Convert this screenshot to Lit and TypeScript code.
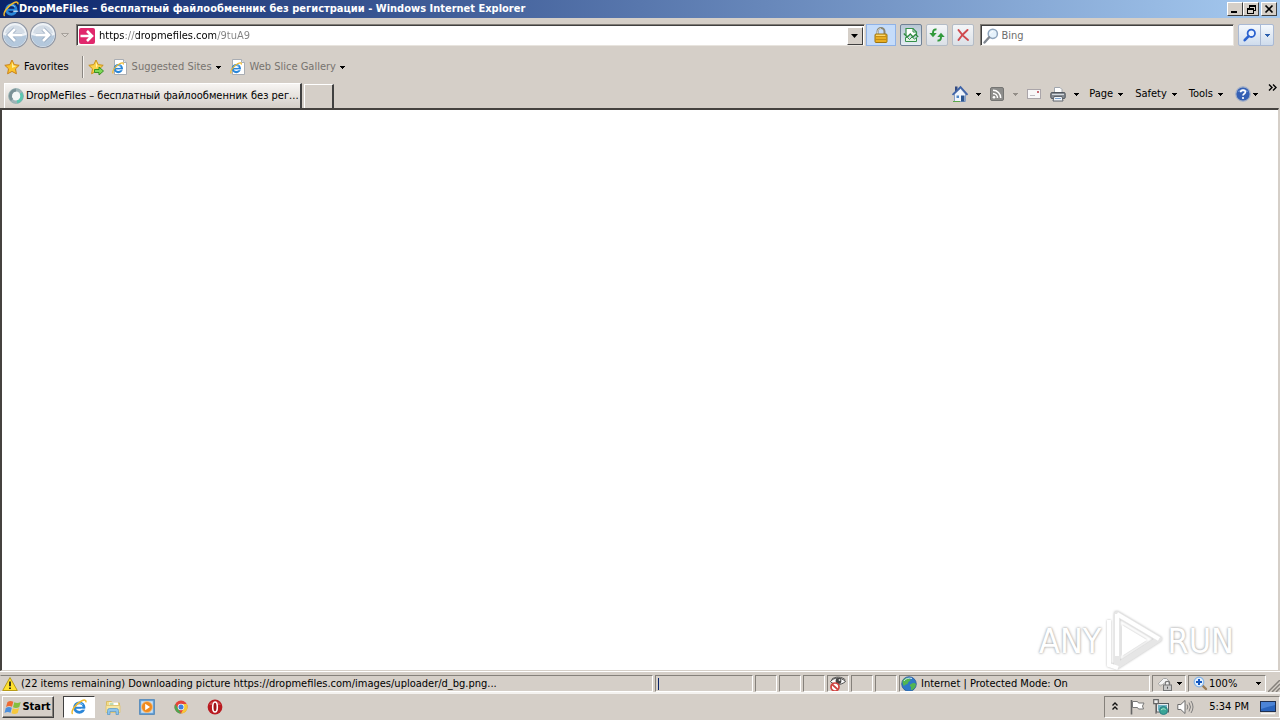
import { LitElement, html, css, svg, nothing } from "lit";
import { customElement, property } from "lit/decorators.js";

const arrow = (color = "#000") => html`<svg class="arrow" width="5" height="3" viewBox="0 0 5 3" shape-rendering="crispEdges"><path d="M0 0h5v1h-1v1h-1v1h-1v-1h-1v-1h-1z" fill=${color} /></svg>`;

const ieMark = svg`
  <circle cx="8.3" cy="8.6" r="4.7" fill="none" stroke="#2a86d8" stroke-width="2.8" />
  <path d="M5 8.8h8.8" stroke="#2a86d8" stroke-width="2" />
  <path d="M10.2 10.2h5" stroke="#f4f8fc" stroke-width="1" />
  <path d="M5 6.2c1.600-2.500 5.200-2.800 6.800-.4" stroke="#8ed0fa" stroke-width="1" fill="none" />
  <path d="M1.600 15C-.8 12.500 5 4.600 10.500 2c3-1.500 5-1.200 4.400 1.400" stroke="#f0b92c" stroke-width="1.500" fill="none" />`;

const starShape = "M8 1l2.200 4.600 5 .7-3.700 3.500.9 5L8 12.400l-4.400 2.400.9-5L.8 6.300l5-.7z";

const icons: Record<string, unknown> = {
  ie: ieMark,
  iePage: svg`<path d="M2.500.5h9l3 3v12h-12z" fill="#fff" stroke="#a9adb3" /><path d="M11.500.5v3h3" fill="#dde6ee" stroke="#a9adb3" /><g transform="translate(0 3) scale(.76)">${ieMark}</g>`,
  star: svg`<path d=${starShape} fill="#fbc42a" stroke="#c9811a" /><path d="M8 3l1.400 3.400 3.200.5L8 9z" fill="#fff0a0" />`,
  starAdd: svg`<path d=${starShape} fill="#fbd24a" stroke="#c9911a" /><path d="M8 3l1.400 3.400L8 9z" fill="#fff3b0" /><path d="M6.500 10.500h4.500V8l4.500 4-4.500 4v-2.500H6.500z" fill="#7ed957" stroke="#2c8a1c" stroke-width=".9" />`,
  spinner: svg`<circle cx="8" cy="8" r="6" fill="#f4f6f6" stroke="#9fb4b8" stroke-width="3" /><path d="M8 2a6 6 0 0 0-4 10" fill="none" stroke="#7b9197" stroke-width="3" /><path d="M13 5a6 6 0 0 1-4 9" fill="none" stroke="#5ac8b0" stroke-width="3" /><circle cx="8" cy="8" r="7.500" fill="none" stroke="#8aa" stroke-width=".6" />`,
  drop: svg`<rect width="16" height="16" rx="2" fill="#e0286c" /><path d="M1.500 8h11M8 3l5 5-5 5" fill="none" stroke="#fff" stroke-width="2.600" />`,
  lock: svg`<path d="M4.500 8V4.500a3.500 3.500 0 0 1 7 0V8" fill="none" stroke="#8a8674" stroke-width="2" /><path d="M4.500 7V4.500a3.500 3.500 0 0 1 3.500-3" fill="none" stroke="#d5d2c4" stroke-width="1" /><rect x="2" y="7" width="12" height="8.500" rx="1" fill="#e9ae22" stroke="#9c7412" /><path d="M2.500 9.500h11M2.500 12.500h11" stroke="#c38d14" /><path d="M3 8.300h9" stroke="#ffe387" />`,
  compat: svg`<path d="M3 8V1.500h7l3.500 3.500v4" fill="#fff" stroke="#35904a" stroke-width="1.200" /><path d="M10 1.500V5h3.500" fill="none" stroke="#35904a" /><path d="M.8 6.500l3.500 3.500 3-3 2.700 3 2.500-2.500 2.700 2.500" fill="none" stroke="#2e8b3f" stroke-width="1.300" /><path d="M2.500 10.500v4h11v-4l-2 1.500-2.500-2-2.500 2.500-2-2z" fill="#e4f4e4" stroke="#35904a" />`,
  refresh: svg`<path d="M7.500 2.500C5 2 4 3.500 4 6" fill="none" stroke="#329a3c" stroke-width="2" /><path d="M.3 6h7.400L4 10.200z" fill="#329a3c" /><path d="M8.500 13.500c2.500.5 3.500-1 3.500-3.500" fill="none" stroke="#329a3c" stroke-width="2" /><path d="M8.300 10h7.400L12 5.800z" fill="#329a3c" />`,
  stop: svg`<path d="M3.500 3c2 3 5 7 9.500 10M12.500 3C9 6 6 9 3.500 13" fill="none" stroke="#d04a4e" stroke-width="2" stroke-linecap="round" />`,
  search: svg`<circle cx="9.800" cy="5.800" r="4.600" fill="#e6f2fb" stroke="#8fa5bd" stroke-width="1.500" /><path d="M6.200 9.300L1.500 14.500" stroke="#808790" stroke-width="2.400" stroke-linecap="round" /><path d="M7.500 5.500a2.500 2.500 0 0 1 2.500-2" stroke="#fff" fill="none" />`,
  go: svg`<circle cx="9.300" cy="6.300" r="3.700" fill="#e9f2ff" stroke="#2b62cf" stroke-width="1.800" /><path d="M6.400 9.300l-3.700 3.900" stroke="#2b62cf" stroke-width="2.600" stroke-linecap="round" />`,
  home: svg`<path d="M3 .5h2.500V4L3 6z" fill="#334a80" /><path d="M2.500 8L8.500 2.500l5 5.500v7.500h-11z" fill="#f0f5fb" stroke="#8aa0c4" /><path d="M.5 8.800L8.500 1l7 7.800" fill="none" stroke="#3f64a8" stroke-width="1.800" /><rect x="9" y="9.500" width="3.500" height="6" fill="#2a5590" /><rect x="4.500" y="9.500" width="2.500" height="2.500" fill="#4f86c6" /><path d="M1 15.500h7" stroke="#5ba84a" />`,
  rss: svg`<rect x="1.500" y="1.500" width="13" height="13" rx="1.500" fill="#8d8d8b" stroke="#757573" /><circle cx="5" cy="11.300" r="1.300" fill="#fff" /><path d="M4 7.500a4.500 4.500 0 0 1 4.500 4.500M4 4.300A7.700 7.700 0 0 1 11.700 12" fill="none" stroke="#fff" stroke-width="1.500" />`,
  mail: svg`<rect x="1.500" y="3.500" width="13" height="9" fill="#f8f7f8" stroke="#aaa5a9" /><rect x="11" y="5" width="2" height="2" fill="#c86a74" /><path d="M4 9.500h5" stroke="#c0bcc2" />`,
  printer: svg`<path d="M4.500 7V1.500h5.500l2 2V7" fill="#fff" stroke="#a0a6ae" /><rect x=".8" y="6.500" width="14.400" height="6" rx="1.300" fill="#858b92" stroke="#50565d" /><path d="M2 8.500h12" stroke="#d4d9de" /><path d="M4 10.500h8l1 4.500H3z" fill="#f5f8fb" stroke="#5e646c" /><path d="M5 12.500h6" stroke="#7ea4d0" />`,
  help: svg`<circle cx="8" cy="8" r="7.200" fill="#3560b4" stroke="#a3b0c8" stroke-width="1.200" /><path d="M2.500 6a6 4.500 0 0 1 11 0z" fill="#86a9e4" opacity=".6" /><path d="M5.700 6.200C5.700 3.400 10.400 3.400 10.400 6c0 1.800-2.400 1.700-2.400 3.600" fill="none" stroke="#fff" stroke-width="1.700" /><circle cx="8" cy="12" r="1.100" fill="#fff" />`,
  warn: svg`<path d="M8 1.500L15.300 14.500H.7z" fill="#ffe12e" stroke="#b79a18" stroke-linejoin="round" /><path d="M8 5.500v4.800M8 11.500v1.600" stroke="#111" stroke-width="1.600" />`,
  eye: svg`<path d="M1.500 5.500C5 1 12 1 16.500 5.500c-4.500 4-11.500 4-15 0z" fill="#fff" stroke="#4a4a4a" /><path d="M2.500 3.500C6 0 13 .5 16.500 4" fill="none" stroke="#555" stroke-width="1" /><circle cx="9.500" cy="5" r="2.900" fill="#444" /><circle cx="10.500" cy="4" r=".9" fill="#ddd" /><circle cx="6" cy="11" r="4" fill="#fff" stroke="#cf4340" stroke-width="1.700" /><path d="M3.200 8.500l5.600 5" stroke="#cf4340" stroke-width="1.700" />`,
  globe: svg`<circle cx="8" cy="8" r="7.300" fill="#2f78c8" stroke="#2a5a94" stroke-width=".8" /><path d="M4 2.500c3-1.500 5-.5 5.500 1S7 5.500 7 7s-2.500 1-3.500 2.500S2 8 1.500 6.500 2.500 3.500 4 2.500zM10 8c2-1.500 4-1 5 0-.3 3-2 5.300-4.500 6.300C9 13 11 11.500 9.500 10.500S9 8.800 10 8z" fill="#52b552" /><path d="M3 5a6 4.500 0 0 1 8-2.500" stroke="#c8e6fa" fill="none" />`,
  protect: svg`<path d="M1 8l5.500-5.500h3L12 5v4" fill="#f4f4f4" stroke="#a8a8a8" /><path d="M1.500 8.500l2 1.500 4-3" fill="none" stroke="#b0b0b0" /><rect x="6.500" y="9" width="8" height="5.500" fill="#c9c9c9" stroke="#777" /><path d="M8.300 9V7c0-2.300 4.300-2.300 4.300 0V9" fill="none" stroke="#777" stroke-width="1.200" /><path d="M10.500 10.700v2" stroke="#555" />`,
  zoom: svg`<path d="M9 9l4 4" stroke="#9a7b56" stroke-width="2.400" stroke-linecap="round" /><circle cx="6" cy="6" r="4.800" fill="#e3f0fd" stroke="#86b4e6" stroke-width="1.200" /><path d="M6 3v6M3 6h6" stroke="#1558c0" stroke-width="2" />`,
  windows: svg`<path d="M2.500 3C4.500 1.600 6.500 1.700 8.300 2.800L7 7.800C5.200 6.700 3 6.700 1 8z" fill="#ee6a33" /><path d="M9.300 3.300C11.300 4.400 13.500 4.300 15.700 3L14.300 8C12.300 9.200 10 9.300 8 8.200z" fill="#84bf3f" /><path d="M.8 9C2.800 7.700 4.900 7.700 6.800 8.800L5.500 13.800C3.700 12.700 1.500 12.700-.5 14z" fill="#4b8fdd" /><path d="M7.800 9.300c2 1.100 4.200 1 6.300-.3l-1.400 5c-2 1.200-4.200 1.300-6.200.2z" fill="#f6c83c" />`,
  folder: svg`<path d="M1.500 2.500h5l1 1.500h7v9h-13z" fill="#f3dc88" stroke="#d8bd68" /><path d="M4 3.500h9v4H4z" fill="#fff" /><path d="M4.500 5h4" stroke="#79b86c" /><path d="M1 6.500h14v7H1z" fill="#f8e7a2" stroke="#dfc67a" /><path d="M2.500 15.500v-4q0-2 2-2h7q2 0 2 2v4h-2.500v-3H5v3z" fill="#8dc4ec" stroke="#5595c4" stroke-width=".7" />`,
  media: svg`<rect x=".7" y=".7" width="14.600" height="14.600" fill="#6fa8dc" stroke="#4a84b8" /><rect x="2.200" y="2.200" width="11.600" height="11.600" fill="#c9e2f6" /><circle cx="8" cy="8" r="5.500" fill="#f08a1d" stroke="#f9c080" stroke-width=".8" /><path d="M6.200 4.800L11 8l-4.800 3.200z" fill="#fff" />`,
  chrome: svg`<circle cx="8" cy="8" r="6.500" fill="#e5443a" /><path d="M2.300 4.900L5.200 9.700 8 14.500A6.500 6.500 0 0 1 2.300 4.900z" fill="#4ea652" /><path d="M8 5h5.800A6.500 6.500 0 0 1 8 14.500l2.700-5z" fill="#f5c937" /><circle cx="8" cy="8" r="3.300" fill="#f4f6f8" /><circle cx="8" cy="8" r="2.500" fill="#3f7fe0" />`,
  opera: svg`<circle cx="8" cy="8" r="7.400" fill="#b91a20" /><path d="M2 6a6.500 5.500 0 0 1 12 0z" fill="#e0666a" opacity=".6" /><ellipse cx="8" cy="8" rx="2.300" ry="5" fill="#a01217" stroke="#fff" stroke-width="1.600" />`,
  chevrons: svg`<path d="M7.500 6.500L10 4l2.500 2.500M7.500 10.500L10 8l2.500 2.500" fill="none" stroke="#111" stroke-width="1.400" />`,
  flag: svg`<path d="M2.500 1v14.500" stroke="#666" stroke-width="1.600" /><path d="M3.500 2.500h5l1 1.500h5.500l-1.500 3 1 3H9.500l-1-1.500h-5z" fill="#fff" stroke="#777" />`,
  network: svg`<rect x="3.500" y="4.500" width="12" height="8.500" fill="#e8ecee" stroke="#555b60" /><rect x="5" y="6" width="9" height="5.500" fill="#6fb3c4" /><path d="M.7.700h4.600v4H.7zM3 4.700v10" fill="#eee" stroke="#666" stroke-width="1.200" /><circle cx="10.500" cy="11.500" r="4" fill="#3aa596" stroke="#2a7f86" /><path d="M8 11c1.500-1.500 3-1.500 4.500-.5" stroke="#b8ead0" fill="none" />`,
  sound: svg`<path d="M.8 5.500h3L8 1.500v13L3.800 10.500h-3z" fill="#fff" stroke="#6b6b6b" /><path d="M10 5.500q1.700 2.500 0 5M12 3.500q3 4.500 0 9M14 2q4 6 0 12" fill="none" stroke="#7d7d7d" />`,
  desktop: svg`<rect x=".5" y="2.500" width="15" height="10" fill="#2a64bc" stroke="#20304f" /><path d="M1 3h14v3Q8 8 1 10z" fill="#4c84d6" /><path d="M1 14.500h14" stroke="#f4f4f4" stroke-width="1.500" />`,
};

@customElement("ui-icon")
class UiIcon extends LitElement {
  static styles = css`
    :host { display: inline-flex; flex: none; }
    .glyph { display: block; overflow: visible; }
  `;
  @property() name = "";
  render() {
    return html`<svg class="glyph" width="16" height="16" viewBox="0 0 16 16" aria-hidden="true">${icons[this.name] ?? nothing}</svg>`;
  }
}

const round = (label: string, flip: boolean) => html`<button class="round" aria-label=${label}>
  <svg width="28" height="28" viewBox="0 0 28 28">
    <circle cx="14" cy="14" r="12.500" fill="#eef2f6" stroke="#8d95a3" stroke-width="1.200" />
    <path d="M2.500 14a11.500 11.500 0 0 0 23 0q-11.500 4-23 0z" fill="#b4c8dc" />
    <path d="M4 12a10.300 10.300 0 0 1 20 0q-10 4-20 0z" fill="#d3dce6" />
    <g transform=${flip ? "rotate(180 14 14)" : ""}><path d="M14 8l-6 6 6 6M8.500 14H21" fill="none" stroke="#8fa2ba" stroke-width="4.200" /><path d="M14 8l-6 6 6 6M8.500 14H21" fill="none" stroke="#fff" stroke-width="2.800" /></g>
  </svg></button>`;

@customElement("app-root")
class AppRoot extends LitElement {
  static styles = css`
    :host {
      display: flex; flex-direction: column; height: 100vh; position: relative; overflow: hidden;
      background: #d5cfc8; color: #000;
      font: 11px/14px "DejaVu Sans Condensed", "DejaVu Sans", sans-serif;
    }
    * { box-sizing: border-box; }
    button, input { font: inherit; color: inherit; margin: 0; padding: 0; border: 0; background: none; border-radius: 0; outline: 0; }
    button { display: flex; align-items: center; justify-content: center; flex: none; white-space: nowrap; }
    a { color: inherit; text-decoration: none; }
    .arrow { display: block; flex: none; }
    .titlebar { display: flex; align-items: center; height: 18px; padding: 0 3px; background: linear-gradient(90deg, #0a246a, #a6caf0); color: #fff; }
    .title { flex: 1; margin: 0; font: inherit; font-weight: bold; white-space: nowrap; overflow: hidden; }
    .win { width: 16px; height: 14px; background: #d5cfc8; border: 1px solid; border-color: #fff #404040 #404040 #fff; }
    .win.close { margin-left: 2px; }
    .nav { display: flex; align-items: center; height: 34px; padding: 0 6px 0 1px; }
    .round { width: 28px; height: 28px; }
    .recent { width: 16px; height: 22px; margin-right: 3px; }
    .field { display: flex; align-items: center; height: 22px; background: #fff; border: 1px solid; border-color: #807c76 #e8e4de #e8e4de #807c76; box-shadow: inset 1px 1px #404040; }
    .address { flex: 782; padding: 1px 1px 0 2px; gap: 4px; }
    .url { flex: 1; min-width: 0; height: 18px; }
    .url {
      color: transparent; caret-color: #000;
      background: linear-gradient(90deg, #000 26px, #808080 26px 37px, #000 37px 117px, #808080 117px);
      -webkit-background-clip: text; background-clip: text;
    }
    .drop { width: 16px; height: 18px; background: #d5cfc8; border: 1px solid; border-color: #fff #404040 #404040 #fff; }
    .lockbtn { width: 30px; height: 22px; margin: 0 4px 0 1px; background: #c5dcfa; border: 1px solid #8fb2e6; }
    .tool { width: 22px; height: 22px; margin-right: 4px; border: 1px solid #b4bcc6; border-radius: 2px; background: linear-gradient(#f4f6f8, #dbe0e6); }
    .tool.on { border-color: #6f8196; background: linear-gradient(#b7c6d4, #e4ecf2); }
    .search { flex: 248; margin: 0 4px 0 2px; padding: 1px 2px 0 2px; gap: 3px; }
    .query { flex: 1; min-width: 0; height: 18px; }
    .query::placeholder { color: #6d6d6d; opacity: 1; }
    .go { display: flex; height: 22px; border: 1px solid #a9b9d4; border-radius: 2px; background: linear-gradient(#f4f8fd, #cfdcec); }
    .go button + button { border-left: 1px solid #a9b9d4; }
    .gobtn { width: 21px; }
    .goarrow { width: 13px; }
    .favs { display: flex; align-items: center; height: 30px; padding: 0 4px; color: #77736f; }
    .link { display: flex; align-items: center; gap: 4px; margin-right: 9px; white-space: nowrap; }
    .fav { color: #000; margin-right: 13px; }
    .sep { width: 2px; height: 22px; border-left: 1px solid #8a8681; border-right: 1px solid #f5f2ee; margin-right: 4px; }
    .addfav { margin-right: 8px; }
    .tabs { display: flex; align-items: flex-end; height: 26px; padding: 0 3px 0 4px; }
    .tab { display: flex; align-items: center; justify-content: flex-start; gap: 2px; flex: 0 1 298px; min-width: 0; height: 25px; padding: 0 0 0 3px; border: solid; border-width: 1px 2px 0 1px; border-color: #fff #404040 #fff #fff; background: linear-gradient(#f7f5f3, #d5cfc8); }
    .newtab { width: 30px; height: 24px; margin-left: 2px; border: solid; border-width: 1px 2px 0 1px; border-color: #fff #404040 #fff #fff; }
    .cmds { display: flex; align-items: center; margin-left: auto; height: 28px; }
    .cmd { height: 22px; gap: 5px; margin-right: 12px; }
    .cmd.icon { gap: 8px; margin-right: 8px; }
    .cmd.help { gap: 2px; margin-right: 10px; }
    .menus { display: flex; margin-left: 2px; }
    .more { align-self: flex-start; padding-top: 4px; }
    .page { flex: 1; min-height: 0; background: #fff; border: solid; border-width: 2px 1px 1px 2px; border-color: #45423f #d5cfc8 #d5cfc8 #45423f; margin-right: 1px; }
    .status { display: grid; grid-template-columns: minmax(0, 653fr) 98px repeat(6, 22px) minmax(0, 251fr) 34px 78px 12px; column-gap: 2px; align-items: stretch; height: 23px; padding-top: 3px; border-bottom: 2px solid #f4f2ef; border-top: 1px solid #fff; }
    .pane { display: flex; align-items: center; gap: 4px; min-width: 0; padding: 0 1px; white-space: nowrap; overflow: hidden; border: 1px solid; border-color: #85817b #fff #fff #85817b; }
    .pane.first { gap: 3px; border-left-color: #d5cfc8; }
    .pane.tools { justify-content: space-between; padding: 0 4px; }
    .level { display: flex; align-items: center; }
    .bar { width: 1px; height: 12px; margin-left: 1px; background: #0a246a; }
    .grip { align-self: end; justify-self: end; }
    .taskbar { display: flex; align-items: center; height: 26px; padding-left: 2px; }
    .start { width: 52px; height: 22px; gap: 1px; font-weight: bold; border: 1px solid; border-color: #fff #404040 #404040 #fff; box-shadow: inset -1px -1px #85817b; }
    .app { width: 32px; height: 22px; margin-right: 2px; }
    .app.active { margin-left: 9px; background: #fff; border: 1px solid; border-color: #404040 #fff #fff #404040; }
    .tray { display: flex; align-items: center; gap: 8px; height: 22px; margin-left: auto; padding-right: 3px; border: 1px solid; border-color: #85817b #fff #fff #85817b; }
    .clock { margin: 0 3px 0 8px; white-space: nowrap; }
    .mark { position: absolute; right: 46px; bottom: 49px; display: flex; align-items: center; gap: 4px; color: #fff; font: 34px/60px "DejaVu Sans Condensed", sans-serif; text-shadow: 0 0 3px #aaa, 0 0 2px #bbb; pointer-events: none; }
    .play { display: block; filter: drop-shadow(0 0 1px #bbb); }
  `;

  private menus = ["Page", "Safety", "Tools"];
  private apps = [["folder", "Windows Explorer"], ["media", "Media Player"], ["chrome", "Chrome"], ["opera", "Opera"]];

  render() {
    const name = "DropMeFiles – бесплатный файлообменник без регистрации";
    const tabName = `${name.slice(0, name.indexOf("истрации"))}...`;
    return html`
      <header class="titlebar">
        <ui-icon name="ie"></ui-icon>
        <h1 class="title">${name} - Windows Internet Explorer</h1>
        <button class="win" aria-label="Minimize"><svg width="12" height="10" viewBox="0 0 12 10"><path d="M2 8h6" stroke="#000" stroke-width="2" /></svg></button>
        <button class="win" aria-label="Restore"><svg width="12" height="10" viewBox="0 0 12 10" shape-rendering="crispEdges"><path d="M4 1h6v5h-2M4 1v3M4 2h6" fill="none" stroke="#000" /><path d="M2 4h6v5H2zM2 5h6" fill="none" stroke="#000" /></svg></button>
        <button class="win close" aria-label="Close"><svg width="12" height="10" viewBox="0 0 12 10"><path d="M2.500 1.500l7 7M9.500 1.500l-7 7" stroke="#000" stroke-width="1.700" /></svg></button>
      </header>
      <nav class="nav">
        ${round("Back", false)}${round("Forward", true)}
        <button class="recent" aria-label="Recent pages"><svg width="8" height="5" viewBox="0 0 8 5"><path d="M.5.500h7L4 4z" fill="#ddd8d2" stroke="#a6a19b" /></svg></button>
        <div class="field address">
          <ui-icon name="drop"></ui-icon>
          <input class="url" aria-label="Address" value="https://dropmefiles.com/9tuA9" />
          <button class="drop" aria-label="Show addresses"><svg width="7" height="4" viewBox="0 0 7 4"><path d="M0 0h7L3.500 4z" /></svg></button>
        </div>
        <button class="lockbtn" aria-label="Security report"><ui-icon name="lock"></ui-icon></button>
        <button class="tool on" aria-label="Compatibility view"><ui-icon name="compat"></ui-icon></button>
        <button class="tool" aria-label="Refresh"><ui-icon name="refresh"></ui-icon></button>
        <button class="tool" aria-label="Stop"><ui-icon name="stop"></ui-icon></button>
        <div class="field search"><ui-icon name="search"></ui-icon><input class="query" aria-label="Search" placeholder="Bing" /></div>
        <div class="go"><button class="gobtn" aria-label="Go"><ui-icon name="go"></ui-icon></button><button class="goarrow" aria-label="Search options">${arrow("#2b5fae")}</button></div>
      </nav>
      <div class="favs">
        <button class="link fav"><ui-icon name="star"></ui-icon>Favorites</button>
        <span class="sep"></span>
        <button class="addfav" aria-label="Add to Favorites bar"><ui-icon name="starAdd"></ui-icon></button>
        <a class="link" href="#"><ui-icon name="iePage"></ui-icon><span>Suggested Sites</span>${arrow()}</a>
        <a class="link" href="#"><ui-icon name="iePage"></ui-icon><span>Web Slice Gallery</span>${arrow()}</a>
      </div>
      <div class="tabs">
        <button class="tab"><ui-icon name="spinner"></ui-icon>${tabName}</button>
        <button class="newtab" aria-label="New tab"></button>
        <div class="cmds">
          <button class="cmd icon" aria-label="Home"><ui-icon name="home"></ui-icon>${arrow()}</button>
          <button class="cmd icon" aria-label="Feeds"><ui-icon name="rss"></ui-icon>${arrow("#938e88")}</button>
          <button class="cmd icon" aria-label="Read mail"><ui-icon name="mail"></ui-icon></button>
          <button class="cmd icon" aria-label="Print"><ui-icon name="printer"></ui-icon>${arrow()}</button>
          <div class="menus">${this.menus.map((m) => html`<button class="cmd">${m}${arrow()}</button>`)}</div>
          <button class="cmd help" aria-label="Help"><ui-icon name="help"></ui-icon>${arrow()}</button>
          <button class="more" aria-label="More commands"><svg width="9" height="7" viewBox="0 0 9 7"><path d="M1 .5l3 3-3 3M5 .5l3 3-3 3" fill="none" stroke="#000" stroke-width="1.400" /></svg></button>
        </div>
      </div>
      <main class="page"></main>
      <div class="status">
        <div class="pane first"><ui-icon name="warn"></ui-icon>(22 items remaining) Downloading picture https://dropmefiles.com/images/uploader/d_bg.png...</div>
        <div class="pane"><span class="bar"></span></div>
        <div class="pane"></div><div class="pane"></div><div class="pane"></div>
        <div class="pane"><ui-icon name="eye"></ui-icon></div>
        <div class="pane"></div><div class="pane"></div>
        <div class="pane"><ui-icon name="globe"></ui-icon>Internet | Protected Mode: On</div>
        <button class="pane tools" aria-label="Protected mode"><ui-icon name="protect"></ui-icon>${arrow()}</button>
        <button class="pane tools"><span class="level"><ui-icon name="zoom"></ui-icon>100%</span>${arrow()}</button>
        <svg class="grip" width="12" height="12" viewBox="0 0 12 12"><path d="M0 12L12 0M4 12l8-8M8 12l4-4" stroke="#85817b" stroke-width="1.500" /></svg>
      </div>
      <footer class="taskbar">
        <button class="start"><ui-icon name="windows"></ui-icon>Start</button>
        <button class="app active" aria-label="Internet Explorer"><ui-icon name="ie"></ui-icon></button>
        ${this.apps.map(([icon, label]) => html`<button class="app" aria-label=${label}><ui-icon name=${icon}></ui-icon></button>`)}
        <div class="tray">
          <ui-icon name="chevrons"></ui-icon><ui-icon name="flag"></ui-icon><ui-icon name="network"></ui-icon><ui-icon name="sound"></ui-icon>
          <time class="clock">5:34 PM</time><ui-icon name="desktop"></ui-icon>
        </div>
      </footer>
      <div class="mark"><span>ANY</span>
        <svg class="play" width="58" height="60" viewBox="0 0 58 60"><path d="M12 3l42 25-42 27z" fill="none" stroke="#e6e6e6" stroke-width="6" stroke-linejoin="round" /><path d="M12 3v42M12 3l42 25M4 9v45l9 3" fill="none" stroke="#fff" stroke-width="4" /><path d="M17 14v31l25-16z" fill="#fff" /></svg>
        <span>RUN</span></div>
    `;
  }
}
